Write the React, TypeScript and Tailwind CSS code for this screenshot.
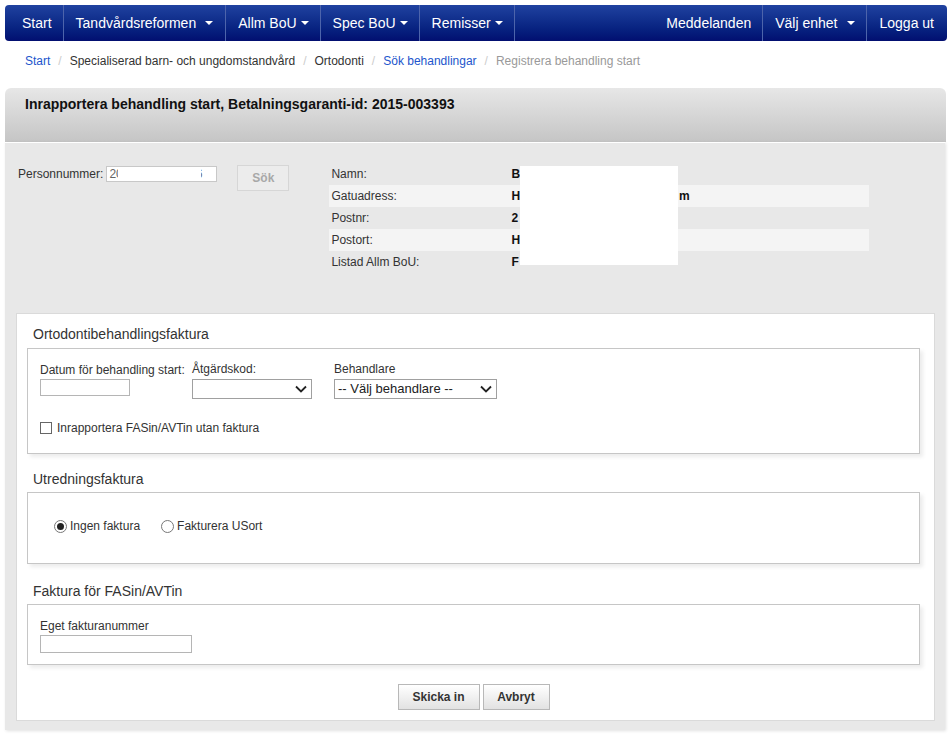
const navLeft = [
  { label: "Start", caret: false, wide: false },
  { label: "Tandvårdsreformen", caret: true, wide: true },
  { label: "Allm BoU", caret: true, wide: false },
  { label: "Spec BoU", caret: true, wide: false },
  { label: "Remisser", caret: true, wide: false },
];

const crumbs = [
  { label: "Start", kind: "link" },
  { label: "Specialiserad barn- och ungdomstandvård", kind: "text" },
  { label: "Ortodonti", kind: "text" },
  { label: "Sök behandlingar", kind: "link" },
  { label: "Registrera behandling start", kind: "active" },
];

function Caret({ wide }: { wide?: boolean }) {
  return (
    <span
      className={`${wide ? "ml-[9px]" : "ml-[4px]"} inline-block h-0 w-0 border-x-[4px] border-t-[4px] border-x-transparent border-t-white`}
    />
  );
}

function Chevron() {
  return (
    <svg width="12" height="8" viewBox="0 0 12 8" className="mr-[4px]">
      <path d="M1 1.5 L6 6.5 L11 1.5" fill="none" stroke="#222" strokeWidth="1.8" />
    </svg>
  );
}

function Select({ width, value }: { width: string; value?: string }) {
  return (
    <div
      className={`${width} flex h-[20px] items-center justify-between border border-[#a0a0a0] bg-white pl-[3px] text-[13px] text-[#222]`}
    >
      <span>{value}</span>
      <Chevron />
    </div>
  );
}

function Radio({ checked, label }: { checked?: boolean; label: string }) {
  return (
    <div className="flex items-center">
      <span className="flex h-[13px] w-[13px] items-center justify-center rounded-full border border-[#777] bg-white">
        {checked && <span className="h-[7px] w-[7px] rounded-full bg-[#222]" />}
      </span>
      <span className="ml-[3px]">{label}</span>
    </div>
  );
}

function Section({
  title,
  top,
  first,
  children,
}: {
  title: string;
  top: string;
  first?: boolean;
  children: React.ReactNode;
}) {
  return (
    <div className={top}>
      <h3 className="pl-[6px] text-[14px] leading-[16px] text-[#333]">{title}</h3>
      <div
        className={`${first ? "mt-[6px]" : "mt-[5px]"} border border-[#c6c6c6] bg-white shadow-[3px_3px_4px_rgba(0,0,0,0.08)]`}
      >
        {children}
      </div>
    </div>
  );
}

const infoRows = [
  { label: "Namn:", value: "B" },
  { label: "Gatuadress:", value: "H", tail: "m" },
  { label: "Postnr:", value: "2" },
  { label: "Postort:", value: "H" },
  { label: "Listad Allm BoU:", value: "F" },
];

export default function App() {
  return (
    <div className="min-h-[739px] bg-white px-[5px] pt-[5px] font-['Liberation_Sans',Arial,sans-serif] text-[12px] text-[#333]">
      {/* top menu */}
      <nav className="flex h-[36px] rounded-[4px] bg-gradient-to-b from-[#2042a0] to-[#020e70] pl-[5px] text-[14px] text-white">
        {navLeft.map((item) => (
          <div
            key={item.label}
            className={`flex items-center border-r border-[#4d64ab] pl-[12px] ${item.wide ? "pr-[12px]" : "pr-[11px]"}`}
          >
            {item.label}
            {item.caret && <Caret wide={item.wide} />}
          </div>
        ))}
        <div className="flex-1" />
        <div className="flex items-center border-r border-[#4d64ab] pl-[12px] pr-[11px]">Meddelanden</div>
        <div className="flex items-center border-r border-[#4d64ab] pl-[12px] pr-[11px]">
          Välj enhet
          <Caret wide />
        </div>
        <div className="flex items-center pl-[13px] pr-[13px]">Logga ut</div>
      </nav>

      {/* breadcrumb */}
      <div className="flex h-[47px] items-start pl-[20px] pt-[12px] text-[12px] leading-[16px]">
        {crumbs.map((c, i) => (
          <span key={c.label} className="flex">
            {i > 0 && <span className="px-[8px] text-[#ccc]">/</span>}
            <span
              className={
                c.kind === "link" ? "text-[#2255cc]" : c.kind === "active" ? "text-[#999]" : "text-[#333]"
              }
            >
              {c.label}
            </span>
          </span>
        ))}
      </div>

      {/* panel */}
      <div className="mr-[1px]">
        <div className="h-[54px] rounded-t-[6px] bg-gradient-to-b from-[#e7e7e7] to-[#c5c5c5] pl-[20px] pt-[8px] text-[14px] font-bold leading-[16px] text-[#111]">
          Inrapportera behandling start, Betalningsgaranti-id: 2015-003393
        </div>
        <div className="mr-[1px] border-t border-white bg-[#e8e8e8] pb-[9px] shadow-[1px_1px_3px_rgba(0,0,0,0.12)]">
          {/* search + info */}
          <div className="flex items-start pl-[13px] pt-[20px]">
            <div className="mt-[3px] flex items-center">
              <span className="leading-[16px]">Personnummer:</span>
              <div className="relative ml-[3px] h-[16px] w-[111px] border border-[#c8c8c8] bg-white">
                <span className="absolute left-[2px] top-0 text-[12px] leading-[14px] text-[#666]">20</span>
                <span className="absolute right-[14px] top-0 text-[12px] leading-[14px] text-[#666]">6</span>
                <span className="absolute left-[11px] top-0 h-full w-[83px] bg-white" />
              </div>
            </div>
            <button className="ml-[20px] mt-[2px] h-[26px] w-[52px] border border-[#d6d6d6] bg-[#ececec] text-[12px] font-bold text-[#a8a8a8]">
              Sök
            </button>
            <div className="relative ml-[40px] w-[540px]">
              {infoRows.map((r, i) => (
                <div
                  key={r.label}
                  className={`flex h-[22px] items-center ${i % 2 === 1 ? "bg-[#f4f4f4]" : ""}`}
                >
                  <span className="w-[182px] pl-[2px]">{r.label}</span>
                  <span className="font-bold text-[#111]">{r.value}</span>
                  {r.tail && <span className="ml-[159px] font-bold text-[#111]">{r.tail}</span>}
                </div>
              ))}
              <div className="absolute left-[191px] top-[3px] h-[99px] w-[158px] bg-white" />
            </div>
          </div>

          {/* form card */}
          <div className="ml-[11px] mr-[10px] mt-[40px] border border-[#dadada] bg-white pb-[10px] pl-[10px] pr-[14px] pt-[12px]">
            <Section title="Ortodontibehandlingsfaktura" top="" first>
              <div className="pb-[18px] pl-[12px] pt-[13px]">
                <div className="flex">
                  <div className="w-[152px] pt-[1px]">
                    <div className="leading-[14px]">Datum för behandling start:</div>
                    <div className="mt-[2px] h-[17px] w-[90px] border border-[#b5b5b5] bg-white" />
                  </div>
                  <div className="w-[142px]">
                    <div className="leading-[14px]">Åtgärdskod:</div>
                    <div className="mt-[3px]">
                      <Select width="w-[120px]" />
                    </div>
                  </div>
                  <div>
                    <div className="leading-[14px]">Behandlare</div>
                    <div className="mt-[3px]">
                      <Select width="w-[163px]" value="-- Välj behandlare --" />
                    </div>
                  </div>
                </div>
                <div className="mt-[22px] flex items-center">
                  <span className="h-[12px] w-[12px] border border-[#666] bg-white" />
                  <span className="ml-[5px] leading-[14px]">Inrapportera FASin/AVTin utan faktura</span>
                </div>
              </div>
            </Section>

            <Section title="Utredningsfaktura" top="mt-[17px]">
              <div className="flex h-[70px] items-start gap-[21px] pl-[26px] pt-[26px] leading-[14px]">
                <Radio checked label="Ingen faktura" />
                <Radio label="Fakturera USort" />
              </div>
            </Section>

            <Section title="Faktura för FASin/AVTin" top="mt-[19px]">
              <div className="pb-[11px] pl-[12px] pt-[14px]">
                <div className="leading-[14px]">Eget fakturanummer</div>
                <div className="mt-[2px] h-[18px] w-[152px] border border-[#b5b5b5] bg-white" />
              </div>
            </Section>

            <div className="mt-[19px] flex justify-center gap-[3px]">
              <button className="h-[26px] w-[82px] border border-[#b8b8b8] bg-gradient-to-b from-white to-[#e2e2e2] text-[12px] font-bold text-[#333]">
                Skicka in
              </button>
              <button className="h-[26px] w-[67px] border border-[#b8b8b8] bg-gradient-to-b from-white to-[#e2e2e2] text-[12px] font-bold text-[#333]">
                Avbryt
              </button>
            </div>
          </div>
        </div>
      </div>
    </div>
  );
}
